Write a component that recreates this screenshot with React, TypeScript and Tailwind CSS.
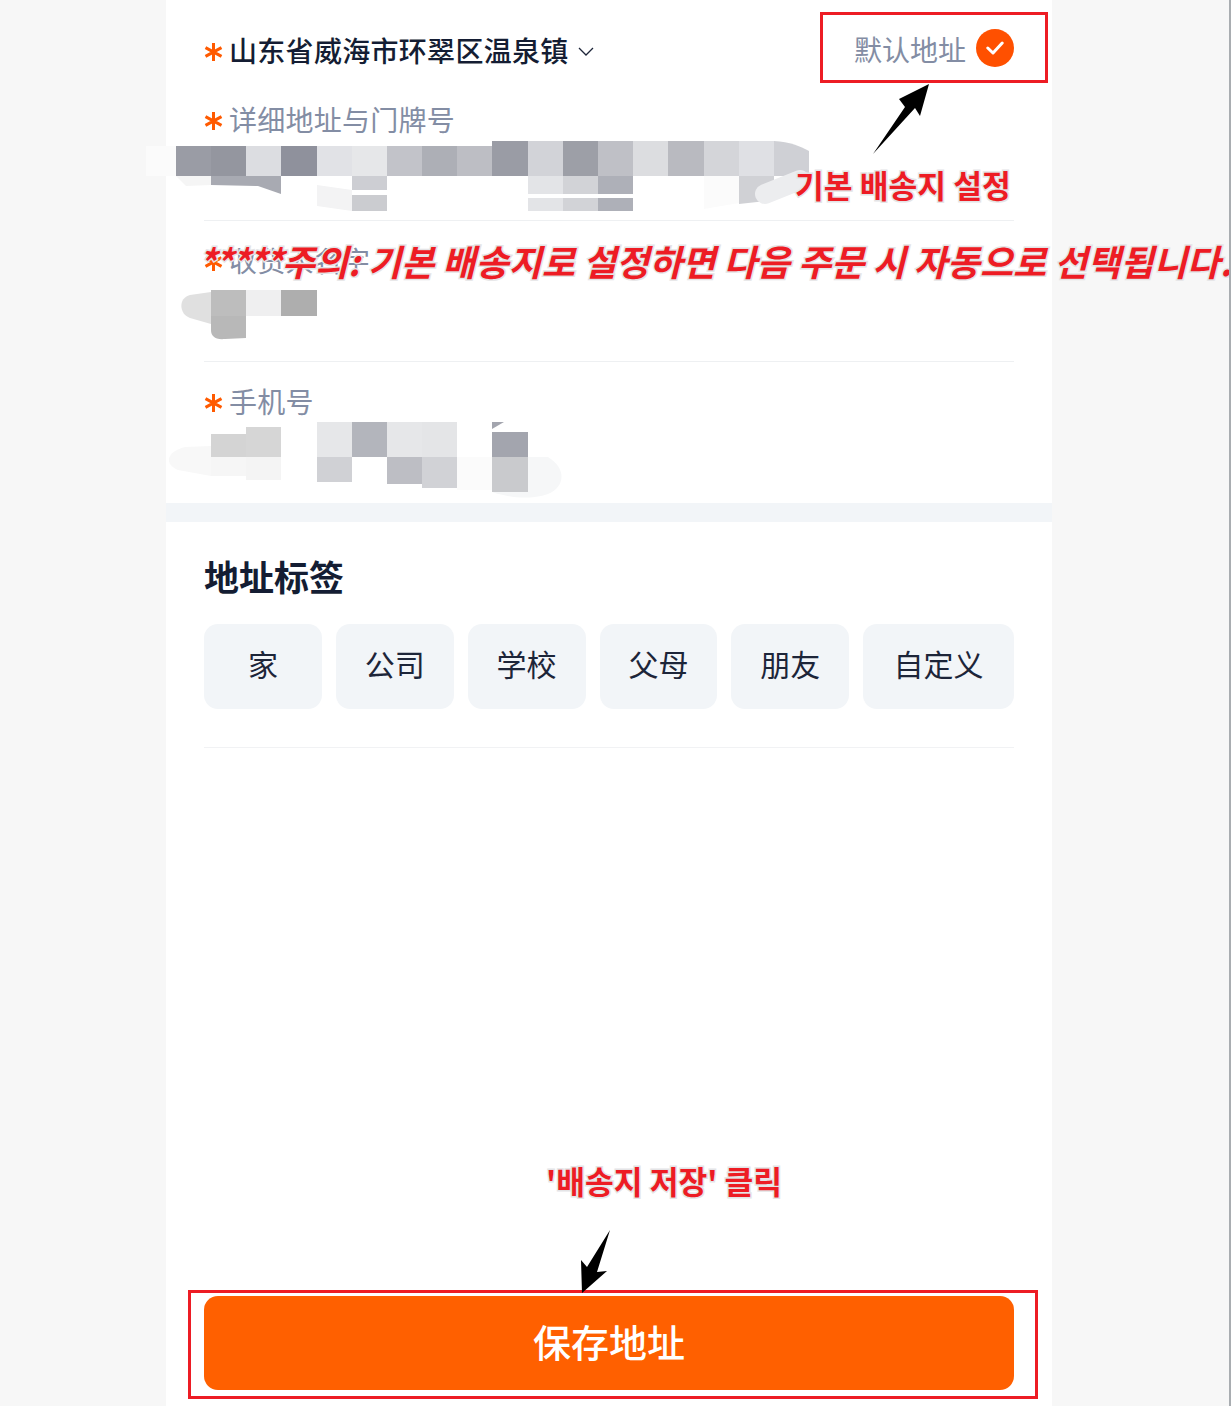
const cjk = "font-['Noto_Sans_CJK_SC','Noto_Sans_CJK_KR',sans-serif]";
const note =
  "absolute whitespace-nowrap font-['Noto_Sans_CJK_KR',sans-serif] font-bold text-[#ed1c24] [-webkit-text-stroke:3px_#e4e4e6] [paint-order:stroke_fill]";

const tags = [
  { label: "家", w: "w-[118px]" },
  { label: "公司", w: "w-[118px]" },
  { label: "学校", w: "w-[118px]" },
  { label: "父母", w: "w-[118px]" },
  { label: "朋友", w: "w-[118px]" },
  { label: "自定义", w: "w-[151px]" },
];

// x, y, w, h, fill in page coordinates
type Cell = [number, number, number, number, string];

const addressCells: Cell[] = [
  [176, 146, 35, 30, "#9a9ca5"],
  [211, 146, 35, 30, "#94969f"],
  [246, 146, 35, 30, "#dcdde1"],
  [281, 146, 36, 30, "#8f919c"],
  [317, 146, 35, 30, "#e1e2e6"],
  [352, 146, 35, 30, "#e6e7e9"],
  [387, 146, 35, 30, "#c2c3c9"],
  [422, 146, 35, 30, "#adafb6"],
  [457, 146, 35, 30, "#bdbec4"],
  [492, 141, 36, 35, "#9a9ca5"],
  [528, 141, 35, 35, "#d2d3d8"],
  [563, 141, 35, 35, "#9d9fa7"],
  [598, 141, 35, 35, "#bfc0c6"],
  [633, 141, 35, 35, "#dcdde0"],
  [668, 141, 36, 35, "#b9bac0"],
  [704, 141, 35, 35, "#d4d5d9"],
  [739, 141, 35, 35, "#dfe0e4"],
  [352, 176, 35, 14, "#cdced3"],
  [352, 195, 35, 16, "#cbccd0"],
  [528, 176, 35, 18, "#e3e4e7"],
  [563, 176, 35, 18, "#d2d3d7"],
  [598, 176, 35, 18, "#aeb0b8"],
  [528, 198, 35, 13, "#e3e4e7"],
  [563, 198, 35, 13, "#d2d3d7"],
  [598, 198, 35, 13, "#aeb0b8"],
];

const nameCells: Cell[] = [
  [211, 290, 35, 26, "#bdbdbd"],
  [246, 290, 35, 26, "#efeff0"],
  [281, 290, 36, 26, "#aeaeae"],
];

const phoneCells: Cell[] = [
  [317, 422, 35, 35, "#e6e7e9"],
  [352, 422, 35, 35, "#b3b5bc"],
  [387, 422, 35, 35, "#e6e7e9"],
  [422, 422, 35, 35, "#e4e5e7"],
  [492, 432, 36, 25, "#a3a5ae"],
  [211, 434, 35, 23, "#d4d4d4"],
  [246, 427, 35, 30, "#d6d6d6"],
  [211, 457, 35, 19, "#f6f6f6"],
  [246, 457, 35, 23, "#f4f4f4"],
  [317, 457, 35, 25, "#d0d1d5"],
  [387, 457, 35, 27, "#bdbec4"],
  [422, 457, 35, 31, "#d1d2d6"],
  [457, 457, 35, 33, "#fbfbfb"],
  [492, 457, 36, 35, "#c9cacd"],
];

function Cells({ cells }: { cells: Cell[] }) {
  return (
    <>
      {cells.map(([x, y, w, h, fill]) => (
        <rect key={`${x}-${y}`} x={x} y={y} width={w} height={h} fill={fill} />
      ))}
    </>
  );
}

function AddressSmudge() {
  return (
    <svg className="absolute -left-[64px] top-0 h-[80px] w-[680px] overflow-visible" viewBox="140 140 680 80" aria-hidden>
      <rect x="146" y="146" width="30" height="30" fill="#fbfbfb" />
      <Cells cells={addressCells} />
      <path d="M774 141 C790 142 800 146 809 151 L809 176 L774 176 Z" fill="#cfd0d5" />
      <path d="M176 176 H211 V185 L186 186 Z" fill="#f5f5f5" />
      <path d="M211 176 H281 V194 L258 186 L211 185 Z" fill="#a8aab2" />
      <path d="M317 185 L352 190 V211 L317 206 Z" fill="#f3f3f4" />
      <path d="M704 176 H739 V203 L704 209 Z" fill="#fbfbfb" />
      <path d="M739 176 H774 V200 L739 204 Z" fill="#d0d1d5" />
      <path d="M765 194 L800 180" stroke="#ecedef" strokeWidth="20" strokeLinecap="round" />
    </svg>
  );
}

function NameSmudge() {
  return (
    <svg className="absolute -left-[64px] top-0 h-[80px] w-[300px] overflow-visible" viewBox="140 281 300 80" aria-hidden>
      <path d="M211 292 L190 295 C178 298 179 314 190 318 L211 324 Z" fill="#e0e0e0" />
      <Cells cells={nameCells} />
      <path d="M211 316 H246 V338 L225 339 C215 340 211 336 211 330 Z" fill="#b8b8b8" />
    </svg>
  );
}

function PhoneSmudge() {
  return (
    <svg className="absolute -left-[64px] top-0 h-[81px] w-[460px] overflow-visible" viewBox="140 422 460 81" aria-hidden>
      <path d="M185 447 L211 446 V476 L178 470 C164 464 166 452 185 447 Z" fill="#f8f8f8" />
      <path d="M528 457 H548 C566 468 566 486 548 494 C530 500 510 498 492 492 V457 Z" fill="#f6f7f8" />
      <Cells cells={phoneCells} />
      <path d="M492 422 H504 L492 429 Z" fill="#a3a5ae" />
    </svg>
  );
}

function Star() {
  return (
    <svg className="mr-[6px] mt-[3px] h-[18px] w-[19px] shrink-0" viewBox="0 0 19 18" fill="none" stroke="#ff5a00" strokeWidth="3" aria-hidden>
      <path d="M9.5 0V18M1.5 4.6L17.5 13.4M17.5 4.6L1.5 13.4" />
    </svg>
  );
}

function Field({ label, border = true, tall = false, children }: { label: string; border?: boolean; tall?: boolean; children: React.ReactNode }) {
  return (
    <div className={border ? "border-b border-[#eef0f2] pt-[20px]" : "pt-[20px]"}>
      <div className="flex h-[40px] items-center pb-[2px] text-[28px] leading-[38px] tracking-[0.25px] text-[#838da4]">
        <Star />
        {label}
      </div>
      <div className={tall ? "relative h-[81px]" : "relative h-[80px]"}>{children}</div>
    </div>
  );
}

export default function App() {
  return (
    <div className={`relative h-[1406px] w-full overflow-hidden bg-[#f7f7f7] pl-[166px] ${cjk}`}>
      <div className="flex h-full w-[886px] flex-col bg-white">
        <div className="px-[38px]">
          <div className="flex h-[80px] items-start justify-between pt-[32px]">
            <div className="flex h-[40px] items-center pb-[3px] text-[28px] font-medium leading-[37px] tracking-[0.3px] text-[#141d33]">
              <Star />
              山东省威海市环翠区温泉镇
              <svg className="ml-[9px] mt-[1px] h-[9px] w-[16px]" viewBox="0 0 16 9" fill="none" stroke="#1d2539" strokeWidth="1.3" aria-hidden>
                <path d="M1 1L8 8L15 1" />
              </svg>
            </div>
            <div className="-mt-[4px] flex h-[40px] items-center text-[28px] leading-[40px] text-[#838da4]">
              <span className="pt-[1px]">默认地址</span>
              <span className="ml-[10px] flex h-[38px] w-[38px] items-center justify-center rounded-full bg-[#ff5000]">
                <svg className="h-[14px] w-[18px]" viewBox="0 0 18 14" fill="none" stroke="#ffffff" strokeWidth="3" strokeLinecap="round" strokeLinejoin="round" aria-hidden>
                  <path d="M1.8 7L7 12L16.2 2" />
                </svg>
              </span>
            </div>
          </div>
          <Field label="详细地址与门牌号">
            <AddressSmudge />
          </Field>
          <Field label="收货人名字">
            <NameSmudge />
          </Field>
          <Field label="手机号" border={false} tall>
            <PhoneSmudge />
          </Field>
        </div>

        <div className="h-[19px] bg-[#f2f5f8]" />

        <div className="flex flex-1 flex-col px-[38px] pb-[16px] pt-[34px]">
          <h2 className="text-[35px] font-bold leading-[40px] text-[#141d33]">地址标签</h2>
          <div className="mt-[28px] flex gap-[14px] border-b border-[#f1f2f4] pb-[38px]">
            {tags.map((t) => (
              <div key={t.label} className={`flex h-[85px] items-center justify-center rounded-[14px] bg-[#f2f5f8] pb-[7px] text-[30px] text-[#1d2539] ${t.w}`}>
                {t.label}
              </div>
            ))}
          </div>
          <button type="button" className="mt-auto flex h-[94px] w-full items-center justify-center rounded-[14px] bg-[#ff6000] pb-[5px] text-[38px] font-medium text-white">
            保存地址
          </button>
        </div>
      </div>

      {/* annotations on top of the screenshot */}
      <div className="absolute left-[820px] top-[12px] h-[71px] w-[228px] border-[3px] border-[#ed1c24]" />
      <div className="absolute left-[188px] top-[1290px] h-[109px] w-[850px] border-[3px] border-[#ed1c24]" />
      <svg className="absolute left-[860px] top-[80px] h-[80px] w-[80px]" viewBox="860 80 80 80" aria-hidden>
        <path d="M873 154L905 107L899 99L929 84L920 116L915 108Z" fill="#000000" />
      </svg>
      <svg className="absolute left-[570px] top-[1225px] h-[72px] w-[50px]" viewBox="570 1225 50 72" aria-hidden>
        <path d="M610 1230L597 1272L607 1271L582 1293L581 1260L587 1267Z" fill="#000000" />
      </svg>
      <div className={`${note} left-[795px] top-[162px] text-[31.3px] leading-[46px]`}>기본 배송지 설정</div>
      <div className={`${note} left-[198px] top-[235px] text-[36px] italic leading-[50px]`}>
        <span className="tracking-[-1.5px]">*****</span>주의: 기본 배송지로 설정하면 다음 주문 시 자동으로 선택됩니다.
      </div>
      <div className={`${note} left-[546px] top-[1158px] text-[31.3px] leading-[46px]`}>'배송지 저장' 클릭</div>
      <div className="absolute right-0 top-0 h-full w-[2px] bg-[#a9adb1]" />
    </div>
  );
}
